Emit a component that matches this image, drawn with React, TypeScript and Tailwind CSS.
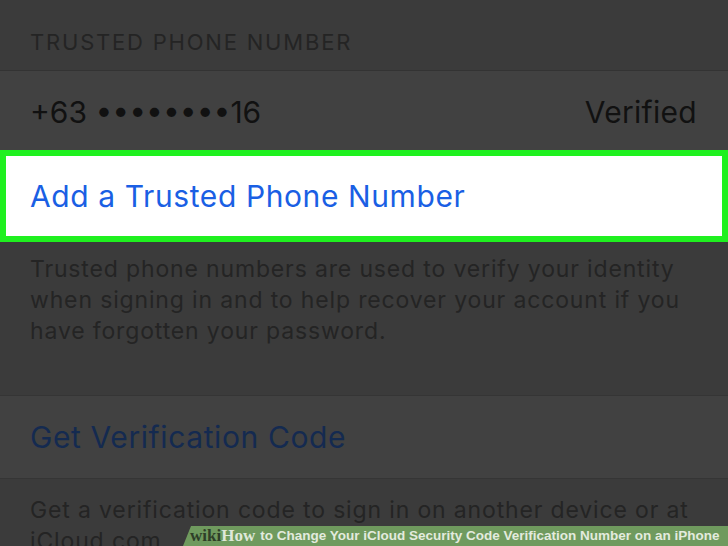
import React from 'react';

const App: React.FC = () => {
  return (
    <div
      className="relative w-[728px] h-[546px] overflow-hidden bg-[#3b3b3b]"
      style={{ fontFamily: 'Inter, "Noto Sans", sans-serif' }}
    >
      {/* section header */}
      <div className="h-[70px] flex items-end px-[30px] pb-[14px]">
        <span className="text-[22px] leading-[28px] text-[#242424] tracking-[1.8px]">TRUSTED PHONE NUMBER</span>
      </div>
      <div className="h-px bg-[#333333]" />

      {/* phone row */}
      <div className="h-[79px] bg-[#414141] flex items-center justify-between pl-[30px] pr-[31px] pt-[3px]">
        <span className="text-[30px] text-[#111111]">+63 ••••••••16</span>
        <span className="text-[30px] text-[#111111] tracking-[0.3px]">Verified</span>
      </div>

      {/* highlighted row */}
      <div className="h-[92px] border-[6px] border-[#1ff01f] bg-white flex items-center px-[24px]">
        <span className="text-[30px] text-[#1a5fe4] tracking-[0.6px]">Add a Trusted Phone Number</span>
      </div>

      {/* description */}
      <div className="h-[153px] px-[30px] pt-[12px]">
        <p className="text-[23px] leading-[31px] text-[#242424] tracking-[0.85px] w-[672px]">
          Trusted phone numbers are used to verify your identity when signing in and to help recover your account if you have forgotten your password.
        </p>
      </div>
      <div className="h-px bg-[#353535]" />

      <div className="h-[82px] bg-[#414141] flex items-center px-[30px]">
        <span className="text-[30px] text-[#142a50] tracking-[0.6px]">Get Verification Code</span>
      </div>
      <div className="h-px bg-[#353535]" />

      <div className="px-[30px] pt-[16px]">
        <p className="text-[23px] leading-[31px] text-[#242424] tracking-[0.85px] w-[690px]">
          Get a verification code to sign in on another device or at iCloud.com.
        </p>
      </div>

      {/* watermark banner */}
      <div className="absolute right-0 bottom-0 h-[20px] w-[545px]">
        <svg className="absolute inset-0" width="545" height="20" viewBox="0 0 545 20" preserveAspectRatio="none">
          <polygon points="8,0 545,0 545,20 0,20" fill="#6f9a5e" />
        </svg>
        <div className="relative h-full pl-[7px] flex items-center whitespace-nowrap">
          <span className="text-[17px] leading-[20px] font-bold text-[#2e3f28]" style={{ fontFamily: '"Liberation Serif", serif' }}>wiki</span>
          <span className="text-[17px] leading-[20px] font-bold text-[#dfe8da]" style={{ fontFamily: '"Liberation Serif", serif' }}>How</span>
          <span className="text-[13.5px] leading-[20px] font-bold text-[#e3ebde] ml-[5px]" style={{ fontFamily: '"Liberation Sans", Arial, sans-serif' }}>
            to Change Your iCloud Security Code Verification Number on an iPhone
          </span>
        </div>
      </div>
    </div>
  );
};

export default App;
